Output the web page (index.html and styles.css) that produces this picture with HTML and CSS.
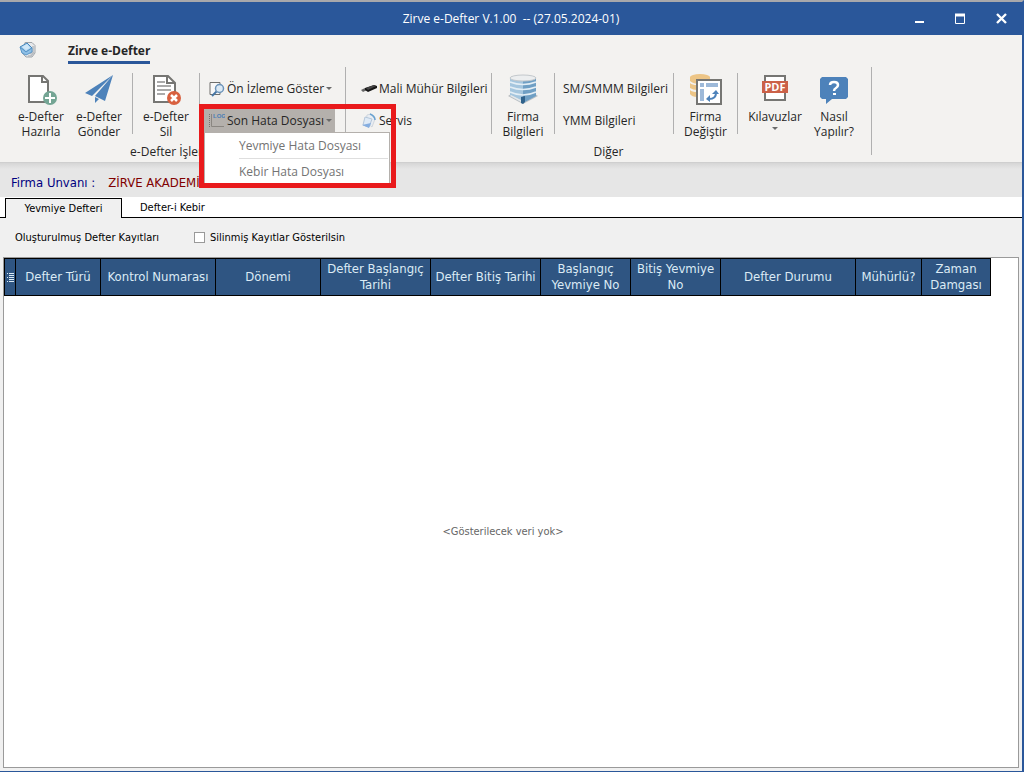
FILE: index.html
```html
<!DOCTYPE html>
<html lang="tr">
<head>
<meta charset="utf-8">
<title>Zirve e-Defter</title>
<link rel="stylesheet" href="styles.css">
</head>
<body>
<div class="window">
  <header class="titlebar">
    <h1 class="title">Zirve e-Defter V.1.00&nbsp; -- (27.05.2024-01)</h1>
    <div class="window-buttons">
      <button class="window-button" aria-label="Simge durumuna küçült"><svg width="11" height="11" viewBox="0 0 11 11"><path d="M1 9h9" stroke="#fff" stroke-width="2"/></svg></button>
      <button class="window-button" aria-label="Ekranı kapla"><svg width="11" height="11" viewBox="0 0 11 11"><path d="M.5 1v9.500h9V1" fill="none" stroke="#fff"/><path d="M0 2h10" stroke="#fff" stroke-width="3"/></svg></button>
      <button class="window-button" aria-label="Kapat"><svg width="11" height="11" viewBox="0 0 11 11"><path d="M1 1l9 9M10 1l-9 9" stroke="#fff" stroke-width="2.400"/></svg></button>
    </div>
  </header>

  <section class="ribbon">
    <nav class="ribbon-tabs">
      <svg class="app-icon" width="18" height="18" viewBox="0 0 18 18"><path d="M6 1.500h7l3 3V12l-3 4H7l-4-4z" fill="#e6e8ea" stroke="#a0a5aa"/><path d="M11 13l3-3V5M9 15h3l3-4" fill="none" stroke="#b8bcc0" stroke-width="1.500"/><path d="M1 6l7-4 5 5-6 4z" fill="#a9d0ee" stroke="#4185bd"/><path d="M1 6l2 6 4 2 6-3V7l-6 4z" fill="#8fc0e6" stroke="#5a97c9"/><path d="M3 6l5-3 3 4-4 2z" fill="#cfe7f8"/></svg>
      <button class="ribbon-tab">Zirve e-Defter</button>
    </nav>
    <div class="ribbon-groups">
      <div class="group">
        <div class="group-tools">
          <button class="tool tool-narrow">
            <svg width="32" height="32" viewBox="0 0 32 32"><path d="M4 2h14l5 5v21H4z" fill="#fff" stroke="#767673" stroke-width="2"/><path d="M17 2v6h6" fill="none" stroke="#767673" stroke-width="2"/><circle cx="25" cy="24" r="7" fill="#74a594"/><path d="M25 19v10M20 24h10" stroke="#fff" stroke-width="2"/></svg>
            <span>e-Defter<br>Hazırla</span>
          </button>
          <button class="tool tool-narrow tool-last">
            <svg width="32" height="32" viewBox="0 0 32 32"><path d="M30 1L2 19l7 3zM30 1L12 22l10 5zM12 23v6l4-4z" fill="#4d82ba"/></svg>
            <span>e-Defter<br>Gönder</span>
          </button>
          <span class="divider"></span>
          <button class="tool tool-wide">
            <svg width="32" height="32" viewBox="0 0 32 32"><path d="M4 2h14l7 7v19H4z" fill="#fff" stroke="#767673" stroke-width="2"/><path d="M17 2v7h8" fill="none" stroke="#767673" stroke-width="2"/><path d="M7 8h8M7 12h14M7 16h14M7 20h8" stroke="#aaa" stroke-width="2"/><circle cx="24" cy="24" r="7" fill="#d8603f"/><path d="M21 21l6 6M27 21l-6 6" stroke="#fff" stroke-width="2.500"/></svg>
            <span>e-Defter<br>Sil</span>
          </button>
          <span class="divider"></span>
          <div class="tool-stack stack-files">
            <button class="small-tool">
              <svg width="16" height="16" viewBox="0 0 16 16"><path d="M1 1.500h10v12H1z" fill="#f8f8f8" stroke="#6f6f6d"/><path d="M8 10l-5 5" stroke="#4776a4" stroke-width="2"/><circle cx="10.500" cy="7.500" r="4" fill="#dceaf5" stroke="#6c93b8" stroke-width="1.500"/></svg>
              <span>Ön İzleme Göster</span><i class="caret"></i>
            </button>
            <div class="menu-anchor">
              <button class="small-tool is-open" aria-haspopup="menu" aria-expanded="true">
                <svg width="16" height="16" viewBox="0 0 16 16"><path d="M.5 1v13" stroke="#77736e" stroke-dasharray="1 1"/><path d="M2.500 1v12.500H15" fill="none" stroke="#8a8681"/><text class="log-mark" x="4" y="5">LOG</text></svg>
                <span>Son Hata Dosyası</span><i class="caret"></i>
              </button>
              <div class="menu" role="menu">
                <button class="menu-item" role="menuitem">Yevmiye Hata Dosyası</button>
                <button class="menu-item" role="menuitem">Kebir Hata Dosyası</button>
              </div>
              <div class="highlight"></div>
            </div>
          </div>
        </div>
        <div class="group-label">e-Defter İşlemleri</div>
      </div>
      <div class="group">
        <div class="group-tools">
          <div class="tool-stack stack-seal">
            <button class="small-tool">
              <svg width="16" height="16" viewBox="0 0 16 16"><path d="M0 9l4-2 2 2-4 2z" fill="#666" /><path d="M4 7l9-3 3 1v2l-9 4-3-2z" fill="#161616"/><path d="M5 7l8-3 2 1-8 4z" fill="#444"/></svg>
              <span>Mali Mühür Bilgileri</span>
            </button>
            <button class="small-tool">
              <svg width="16" height="16" viewBox="0 0 16 16"><path d="M6 2l4-1 4 5-3 8-6-5z" fill="#e8edf3" stroke="#d0d6dd"/><path d="M9 1q5 2 5 6" fill="none" stroke="#69a2d0" stroke-width="1.500"/><path d="M4 4l7 2-3 8-6-2z" fill="#dfeaf6" stroke="#b4c6d9"/><path d="M1 12l7 3 2-5z" fill="#86aee0"/></svg>
              <span>Servis</span>
            </button>
          </div>
          <span class="divider"></span>
          <button class="tool tool-medium">
            <svg width="32" height="32" viewBox="0 0 32 32"><path d="M1 22l15 8 15-8-3-2H4z" fill="#b9bdc0"/><path d="M3 4q13 4 26 0v18l-13 7-13-7z" fill="#a5c6de"/><path d="M16 7q8 0 13-3v18l-13 7z" fill="#6f9fc4"/><ellipse cx="16" cy="4" rx="13" ry="3" fill="#eceeef" stroke="#c3c8cc"/><path d="M3 8q13 5 26 0M3 13q13 5 26 0M3 18q13 6 26 0" fill="none" stroke="#e3eef5" stroke-width="1.500"/><path d="M3 22l11 6 2-1-12-6z" fill="#e6e8e9"/><path d="M14 23l4-1v6l-2 2-2-1z" fill="#2f628b"/></svg>
            <span>Firma<br>Bilgileri</span>
          </button>
          <span class="divider"></span>
          <div class="tool-stack stack-advisor">
            <button class="small-tool"><span>SM/SMMM Bilgileri</span></button>
            <button class="small-tool"><span>YMM Bilgileri</span></button>
          </div>
          <span class="divider"></span>
          <button class="tool tool-change">
            <svg width="32" height="32" viewBox="0 0 32 32"><path d="M0 3v4q3 3 10 3h10V3zM0 9v5q3 2 7 2v-5q-5 0-7-2zM0 16v4q2 3 7 3v-5q-5 0-7-2z" fill="#edc586"/><ellipse cx="10" cy="3" rx="10" ry="3" fill="#edc586"/><path d="M7 6h24v24H7z" fill="#fff" stroke="#767673" stroke-width="2"/><path d="M10 9h4v4h-4zM16 9h12v4H16zM10 15h4v12h-4z" fill="#9db9d9"/><path d="M19 25q7 0 7-6" fill="none" stroke="#4d82ba" stroke-width="2"/><path d="M22 20l4-4 3 4zM20 21v7l-4-3z" fill="#4d82ba"/></svg>
            <span>Firma<br>Değiştir</span>
          </button>
          <span class="divider"></span>
          <button class="tool tool-wider">
            <svg width="32" height="32" viewBox="0 0 32 32"><path d="M6 2h20v24H6z" fill="#fff" stroke="#767673" stroke-width="2"/><path d="M3 7h26v12H3z" fill="#cb6148"/><text class="pdf-mark" x="16" y="17">PDF</text></svg>
            <span>Kılavuzlar</span><i class="caret caret-below"></i>
          </button>
          <button class="tool tool-help">
            <svg width="32" height="32" viewBox="0 0 32 32"><path d="M4 3h24l2 2v18l-2 2H14l-6 5v-5H4l-2-2V5z" fill="#4d82ba"/><path d="M12 11q0-3 4-3t4 3q0 2-2 3t-2 3" fill="none" stroke="#fff" stroke-width="2.500"/><path d="M15 19h3v2h-3z" fill="#fff"/></svg>
            <span>Nasıl<br>Yapılır?</span>
          </button>
        </div>
        <div class="group-label">Diğer</div>
      </div>
    </div>
  </section>

  <div class="company"><span class="company-label">Firma Unvanı :</span><span class="company-name">ZİRVE AKADEMİ</span></div>

  <div class="page-tabs" role="tablist">
    <button class="page-tab is-active" role="tab" aria-selected="true">Yevmiye Defteri</button>
    <button class="page-tab" role="tab" aria-selected="false">Defter-i Kebir</button>
  </div>

  <main class="panel">
    <div class="filters">
      <span class="filters-title">Oluşturulmuş Defter Kayıtları</span>
      <input class="check" type="checkbox" id="deleted"><label for="deleted">Silinmiş Kayıtlar Gösterilsin</label>
    </div>
    <div class="grid">
      <table class="records">
        <colgroup><col class="c-mark"><col class="c-type"><col class="c-control"><col class="c-period"><col class="c-date"><col class="c-date"><col class="c-number"><col class="c-number"><col class="c-status"><col class="c-sealed"><col class="c-stamp"></colgroup>
        <thead><tr>
          <th><svg width="7" height="11" viewBox="0 0 7 11"><path d="M2 1.500h5M2 3.500h5M2 5.500h5M2 7.500h5M2 9.500h5M0 1.500h1M0 5.500h1M0 9.500h1" stroke="#dcebf5"/></svg></th>
          <th>Defter Türü</th><th>Kontrol Numarası</th><th>Dönemi</th><th>Defter Başlangıç<br>Tarihi</th><th>Defter Bitiş Tarihi</th><th>Başlangıç<br>Yevmiye No</th><th>Bitiş Yevmiye<br>No</th><th>Defter Durumu</th><th>Mühürlü?</th><th>Zaman<br>Damgası</th>
        </tr></thead>
      </table>
      <div class="empty">&lt;Gösterilecek veri yok&gt;</div>
    </div>
  </main>
</div>
</body>
</html>
```

FILE: styles.css
```css
* { box-sizing: border-box; }

body {
  margin: 0;
  font: 12px/15px "Open Sans", "Noto Sans", sans-serif;
  color: #262626;
}

button {
  margin: 0;
  padding: 0;
  border: 0;
  background: none;
  font: inherit;
  color: inherit;
}

svg { display: block; flex: none; }

.window {
  display: flex;
  flex-direction: column;
  min-height: 100vh;
  border-top: 2px solid #a8a8ab;
  border-right: 2px solid #2a579a;
  border-bottom: 1px solid #2a579a;
  background: #f0f0f0;
}

.titlebar {
  display: grid;
  grid-template-columns: 1fr auto 1fr;
  align-items: center;
  height: 33px;
  background: #2a579a;
  color: #fff;
}

.title {
  grid-column: 2;
  margin: 0;
  font-size: 12px;
  font-weight: 400;
}

.window-buttons { display: flex; justify-content: flex-end; }

.window-button {
  display: flex;
  align-items: center;
  justify-content: center;
  width: 41px;
  height: 33px;
}

.ribbon {
  background: #f3f2f0;
  border-bottom: 1px solid #cfcfcf;
}

.ribbon-tabs {
  display: flex;
  align-items: flex-start;
  gap: 31px;
  height: 32px;
  padding: 6px 19px 0;
}

.ribbon-tab {
  height: 23px;
  padding-bottom: 2px;
  border-bottom: 3px solid #2a579a;
  font-weight: 700;
}

.ribbon-groups { display: flex; height: 95px; padding-left: 12px; }

.group {
  display: flex;
  flex-direction: column;
  height: 88px;
  border-right: 1px solid #b0b0b0;
}

.group-tools { display: flex; flex: none; height: 77px; padding-top: 6px; }

.group-label { text-align: center; }

.divider { width: 1px; height: 61px; background: #b0b0b0; }

.tool {
  display: flex;
  flex-direction: column;
  align-items: center;
  gap: 3px;
  padding-top: 1px;
}

.tool-narrow { width: 58px; }
.tool-last { margin-right: 4px; }
.tool-medium { width: 62px; }
.tool-change { width: 63px; }
.tool-wide { width: 66px; }
.tool-wider { width: 74px; }
.tool-help { width: 44px; margin-right: 15px; }

.tool-stack { display: flex; flex-direction: column; gap: 9px; padding-top: 4px; }
.stack-files { width: 145px; padding-left: 4px; }
.stack-seal { width: 145px; padding-left: 11px; }
.stack-advisor { width: 118px; padding-left: 8px; }

.small-tool {
  display: flex;
  align-items: center;
  gap: 2px;
  width: 131px;
  height: 23px;
  padding-left: 5px;
  white-space: nowrap;
}

.stack-seal .small-tool { width: auto; padding-left: 4px; }
.stack-advisor .small-tool { width: auto; padding-left: 0; }

.small-tool.is-open { background: #b4b0ac; }

.caret {
  margin: 0 4px 0 auto;
  border: 3px solid transparent;
  border-top-color: #6a6a6a;
  border-bottom: 0;
}

.caret-below { margin: 0 auto; }

.menu-anchor { position: relative; }

.menu {
  position: absolute;
  z-index: 1;
  top: 23px;
  left: 0;
  width: 186px;
  border: 1px solid #b4b0ac;
  background: #fff;
}

.menu-item {
  display: block;
  width: 149px;
  height: 25px;
  margin-left: 34px;
  color: #737373;
  text-align: left;
}

.menu-item + .menu-item { border-top: 1px solid #dedede; }

.highlight {
  position: absolute;
  z-index: 2;
  top: -5px;
  left: -5px;
  width: 197px;
  height: 84px;
  border: 5px solid #e91a1c;
  pointer-events: none;
}

.log-mark { font: 700 6px "Liberation Sans", sans-serif; fill: #4b7fb6; }
.pdf-mark { font: 700 11px "Open Sans", sans-serif; fill: #fff; text-anchor: middle; }

.company {
  display: flex;
  align-items: center;
  gap: 13px;
  height: 34px;
  padding: 6px 11px 0;
  background: linear-gradient(#d6d6d6, #e6e6e6 6px);
  font: 13px/16px "DejaVu Sans Condensed", "DejaVu Sans", sans-serif;
}

.company-label { color: #000080; }
.company-name { color: #800000; }

.page-tabs {
  display: flex;
  height: 21px;
  padding: 1px 5px 0;
  background: #fff;
  box-shadow: inset 0 -1px #000;
  color: #000;
  font: 11px/14px "DejaVu Sans Condensed", "DejaVu Sans", sans-serif;
}

.page-tab { padding: 0 18px; }

.page-tab.is-active {
  width: 117px;
  border: 1px solid #000;
  border-bottom: 0;
  background: #f0f0f0;
}

.panel {
  display: flex;
  flex: 1;
  flex-direction: column;
  padding: 0 3px 3px 3px;
}

.filters {
  display: flex;
  align-items: center;
  height: 39px;
  padding-left: 12px;
  color: #000;
  font: 11px/14px "DejaVu Sans Condensed", "DejaVu Sans", sans-serif;
}

.filters-title { width: 179px; }

.check {
  appearance: none;
  width: 11px;
  height: 11px;
  margin: 0 5px 0 0;
  border: 1px solid #999;
  background: #fff;
}

.grid {
  display: flex;
  flex: 1;
  flex-direction: column;
  border: 1px solid #9a9a9a;
  background: #fff;
}

.records {
  align-self: flex-start;
  width: 987px;
  border-collapse: collapse;
  table-layout: fixed;
}

.records th {
  height: 37px;
  padding: 0;
  border: 1px solid #000;
  background: #2f5582;
  color: #dcebf5;
  font: 13px/16px "DejaVu Sans Condensed", "DejaVu Sans", sans-serif;
  white-space: nowrap;
}

.records svg { margin: 0 auto; }

.c-mark { width: 11px; }
.c-type { width: 85px; }
.c-control { width: 115px; }
.c-period { width: 105px; }
.c-date { width: 110px; }
.c-number { width: 90px; }
.c-status { width: 135px; }
.c-sealed { width: 66px; }
.c-stamp { width: 69px; }

.empty {
  display: flex;
  flex: 1;
  align-items: center;
  justify-content: center;
  padding-right: 16px;
  color: #666;
  font: 11px/14px "DejaVu Sans Condensed", "DejaVu Sans", sans-serif;
}
```
